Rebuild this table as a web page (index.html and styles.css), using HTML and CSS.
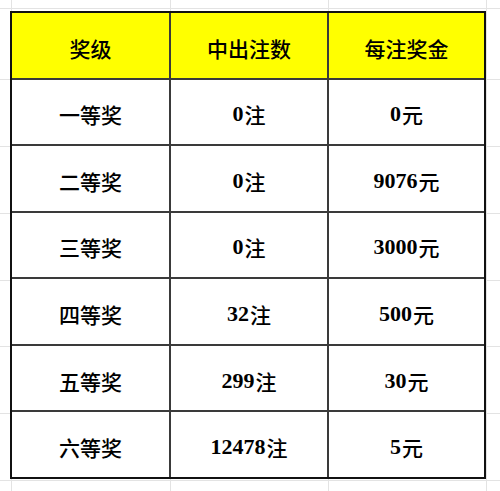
FILE: index.html
```html
<!DOCTYPE html>
<html lang="zh-CN">
<head>
<meta charset="utf-8">
<title>中奖情况</title>
<link rel="stylesheet" href="styles.css">
</head>
<body>
<div class="sheet">
  <div class="prize-table">
    <div class="cell head">奖级</div>
    <div class="cell head">中出注数</div>
    <div class="cell head">每注奖金</div>

    <div class="cell">一等奖</div>
    <div class="cell"><span class="num">0</span>注</div>
    <div class="cell"><span class="num">0</span>元</div>

    <div class="cell">二等奖</div>
    <div class="cell"><span class="num">0</span>注</div>
    <div class="cell"><span class="num">9076</span>元</div>

    <div class="cell">三等奖</div>
    <div class="cell"><span class="num">0</span>注</div>
    <div class="cell"><span class="num">3000</span>元</div>

    <div class="cell">四等奖</div>
    <div class="cell"><span class="num">32</span>注</div>
    <div class="cell"><span class="num">500</span>元</div>

    <div class="cell">五等奖</div>
    <div class="cell"><span class="num">299</span>注</div>
    <div class="cell"><span class="num">30</span>元</div>

    <div class="cell">六等奖</div>
    <div class="cell"><span class="num">12478</span>注</div>
    <div class="cell"><span class="num">5</span>元</div>
  </div>
</div>
</body>
</html>
```

FILE: styles.css
```css
html, body {
  margin: 0;
  padding: 0;
  background: #ffffff;
}

.sheet {
  width: 500px;
  height: 491px;
  box-sizing: border-box;
  padding: 11px 14px 12px 10px;
  background-color: #ffffff;
  background-image:
    linear-gradient(#e3e3e3, #e3e3e3),
    linear-gradient(#e3e3e3, #e3e3e3),
    linear-gradient(#e3e3e3, #e3e3e3),
    linear-gradient(#e3e3e3, #e3e3e3),
    linear-gradient(#e3e3e3, #e3e3e3),
    linear-gradient(#e3e3e3, #e3e3e3),
    linear-gradient(#e3e3e3, #e3e3e3),
    linear-gradient(#e3e3e3, #e3e3e3),
    linear-gradient(#e3e3e3, #e3e3e3),
    linear-gradient(#e3e3e3, #e3e3e3),
    linear-gradient(#e3e3e3, #e3e3e3),
    linear-gradient(#e3e3e3, #e3e3e3);
  background-repeat: no-repeat;
  background-size:
    1px 100%, 1px 100%, 1px 100%, 1px 100%,
    100% 1px, 100% 1px, 100% 1px, 100% 1px,
    100% 1px, 100% 1px, 100% 1px, 100% 1px;
  background-position:
    11px 0, 170px 0, 328px 0, 486px 0,
    0 8px, 0 79px, 0 146px, 0 213px,
    0 280px, 0 346px, 0 413px, 0 480px;
}

.prize-table {
  width: 476px;
  height: 468px;
  box-sizing: border-box;
  border: 2px solid #111111;
  display: grid;
  grid-template-columns: 157px 156px 1fr;
  grid-template-rows: repeat(7, 1fr);
  gap: 2px;
  background: #3a3a3a;
}

.cell {
  background: #ffffff;
  display: flex;
  align-items: center;
  justify-content: center;
  padding-top: 5px;
  box-sizing: border-box;
  font-family: "Noto Sans CJK SC", sans-serif;
  font-weight: 500;
  font-size: 21px;
  color: #000000;
}

.num {
  font-family: "Liberation Serif", serif;
  font-weight: 700;
  font-size: 22px;
  margin-right: 1px;
}

.head {
  background: #ffff00;
}
```
